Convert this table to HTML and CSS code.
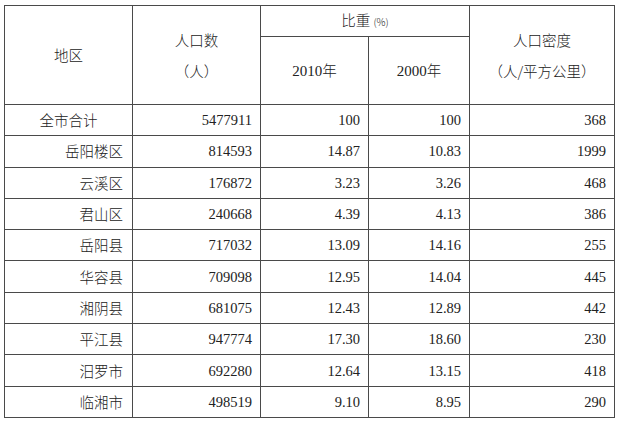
FILE: index.html
```html
<!DOCTYPE html>
<html lang="zh-CN">
<head>
<meta charset="utf-8">
<link rel="stylesheet" href="styles.css">
</head>
<body>
<table class="pop">
  <colgroup>
    <col class="c1"><col class="c2"><col class="c3"><col class="c4"><col class="c5">
  </colgroup>
  <thead>
    <tr class="h1">
      <th rowspan="2">地区</th>
      <th rowspan="2"><div class="l1">人口数</div><div class="l2">（人）</div></th>
      <th colspan="2" class="share">比重 <span class="pct">(%)</span></th>
      <th rowspan="2"><div class="l1">人口密度</div><div class="l2">（人/平方公里）</div></th>
    </tr>
    <tr class="h2">
      <th class="yr"><span class="num">2010</span>年</th>
      <th class="yr"><span class="num">2000</span>年</th>
    </tr>
  </thead>
  <tbody>
    <tr><td class="name center">全市合计</td><td class="num">5477911</td><td class="num">100</td><td class="num">100</td><td class="num">368</td></tr>
    <tr><td class="name">岳阳楼区</td><td class="num">814593</td><td class="num">14.87</td><td class="num">10.83</td><td class="num">1999</td></tr>
    <tr><td class="name">云溪区</td><td class="num">176872</td><td class="num">3.23</td><td class="num">3.26</td><td class="num">468</td></tr>
    <tr><td class="name">君山区</td><td class="num">240668</td><td class="num">4.39</td><td class="num">4.13</td><td class="num">386</td></tr>
    <tr><td class="name">岳阳县</td><td class="num">717032</td><td class="num">13.09</td><td class="num">14.16</td><td class="num">255</td></tr>
    <tr><td class="name">华容县</td><td class="num">709098</td><td class="num">12.95</td><td class="num">14.04</td><td class="num">445</td></tr>
    <tr><td class="name">湘阴县</td><td class="num">681075</td><td class="num">12.43</td><td class="num">12.89</td><td class="num">442</td></tr>
    <tr><td class="name">平江县</td><td class="num">947774</td><td class="num">17.30</td><td class="num">18.60</td><td class="num">230</td></tr>
    <tr><td class="name">汨罗市</td><td class="num">692280</td><td class="num">12.64</td><td class="num">13.15</td><td class="num">418</td></tr>
    <tr><td class="name">临湘市</td><td class="num">498519</td><td class="num">9.10</td><td class="num">8.95</td><td class="num">290</td></tr>
  </tbody>
</table>
</body>
</html>
```
FILE: styles.css
```css
html, body {
  margin: 0;
  padding: 0;
  background: #ffffff;
}
body {
  padding: 5px 0 0 4px;
  font-family: "Noto Sans CJK SC", "Noto Sans", sans-serif;
  color: #222222;
}
.pop {
  border-collapse: collapse;
  table-layout: fixed;
  width: 610px;
}
.c1 { width: 128px; }
.c2 { width: 128px; }
.c3 { width: 108px; }
.c4 { width: 101px; }
.c5 { width: 145px; }
.pop th, .pop td {
  border: 1px solid #4a4a4a;
  padding: 0;
  font-size: 14.5px;
  font-weight: 300;
  line-height: 20px;
}
.pop th {
  text-align: center;
  vertical-align: middle;
}
.h1 th { height: 30px; }
.h2 th { height: 67px; }
.l1 { margin-bottom: 11px; }
.pct { font-size: 10px; }
.pop td { height: 30.3px; }
.name {
  text-align: right;
  padding-right: 9px !important;
}
.name.center {
  text-align: center;
  padding-right: 0 !important;
}
.num {
  font-family: "Liberation Serif", "DejaVu Serif", serif;
  font-size: 15px;
  font-weight: normal;
}
td.num {
  text-align: right;
  padding-right: 8px !important;
}
```
